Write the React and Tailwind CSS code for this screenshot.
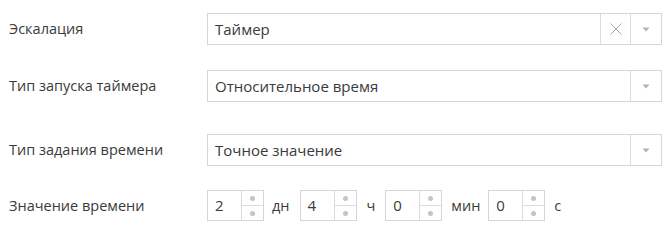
import React from "react";

function Arrow() {
  return (
    <div className="w-[31px] h-full border-l border-[#dcdcdc] flex items-center justify-center">
      <svg width="8" height="5" viewBox="0 0 8 5"><path d="M0.5 0.5 L7.5 0.5 L4 4.5 Z" fill="#b3b3b3" /></svg>
    </div>
  );
}

function Select({ value, clear }) {
  return (
    <div className="w-[455px] h-[32px] border border-[#d6d6d6] bg-white flex items-center">
      <div className="flex-1 pl-[7px] text-[15px] text-[#3a3a3a]">{value}</div>
      {clear && (
        <div className="w-[30px] h-full border-l border-[#dcdcdc] flex items-center justify-center">
          <svg width="12" height="12" viewBox="0 0 12 12"><path d="M0.5 0.5 L11.5 11.5 M11.5 0.5 L0.5 11.5" stroke="#a8a8a8" strokeWidth="1" /></svg>
        </div>
      )}
      <Arrow />
    </div>
  );
}

function Num({ v }) {
  return (
    <div className="w-[57px] h-[31px] border border-[#d6d6d6] bg-white flex">
      <div className="flex-1 pl-[7px] flex items-center text-[15px] text-[#3a3a3a]">{v}</div>
      <div className="w-[22px] border-l border-[#dcdcdc] flex flex-col">
        <div className="flex-1 flex items-center justify-center border-b border-[#dcdcdc]">
          <div className="w-[5px] h-[5px] rounded-full bg-[#c4c4c4]" />
        </div>
        <div className="flex-1 flex items-center justify-center">
          <div className="w-[5px] h-[5px] rounded-full bg-[#c4c4c4]" />
        </div>
      </div>
    </div>
  );
}

export default function App() {
  return (
    <div className="w-[668px] h-[234px] bg-white text-[14.5px] text-[#3a3a3a]" style={{ fontFamily: '"Open Sans", sans-serif' }}>
      <div className="pl-[9px] pt-[13px] flex flex-col">
        <div className="flex items-center">
          <div className="w-[198px]">Эскалация</div>
          <Select value="Таймер" clear />
        </div>
        <div className="flex items-center mt-[25px]">
          <div className="w-[198px]">Тип запуска таймера</div>
          <Select value="Относительное время" />
        </div>
        <div className="flex items-center mt-[32px]">
          <div className="w-[198px]">Тип задания времени</div>
          <Select value="Точное значение" />
        </div>
        <div className="flex items-center mt-[24px]">
          <div className="w-[198px]">Значение времени</div>
          <Num v="2" />
          <span className="ml-[8px] mr-[10px]">дн</span>
          <Num v="4" />
          <span className="ml-[10px] mr-[10px]">ч</span>
          <Num v="0" />
          <span className="ml-[9px] mr-[8px]">мин</span>
          <Num v="0" />
          <span className="ml-[9px]">с</span>
        </div>
      </div>
    </div>
  );
}
